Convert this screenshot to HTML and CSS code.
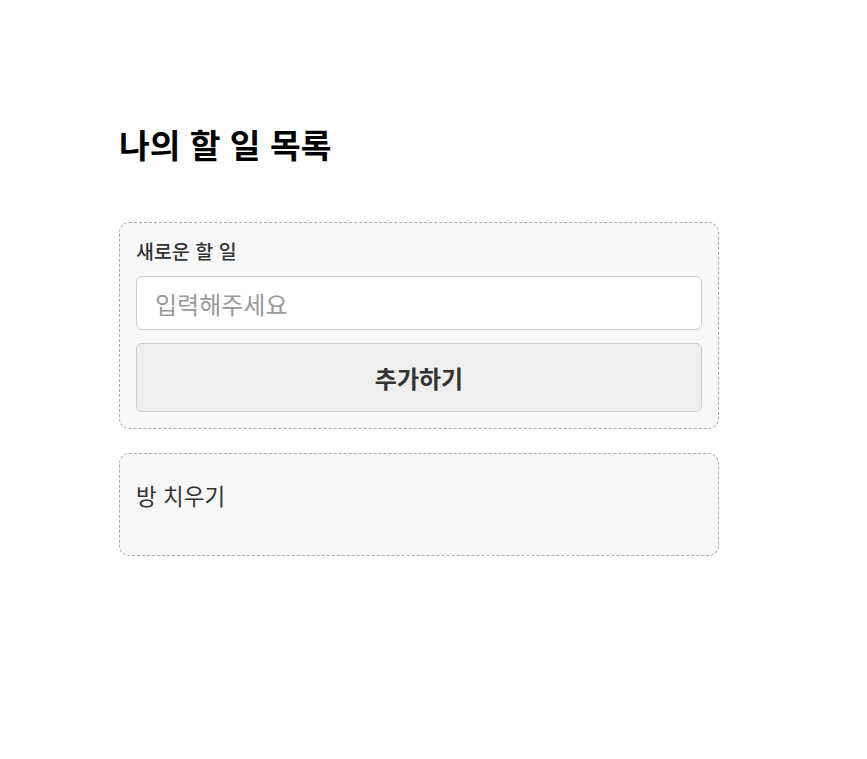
FILE: index.html
```html
<!DOCTYPE html>
<html lang="ko">
<head>
<meta charset="utf-8">
<link rel="stylesheet" href="styles.css">
</head>
<body>
<main class="app">
  <h1 class="title">나의 할 일 목록</h1>
  <section class="card form-card">
    <label class="label" for="todo">새로운 할 일</label>
    <input id="todo" class="input" type="text" placeholder="입력해주세요">
    <button class="btn" type="button">추가하기</button>
  </section>
  <section class="card list-card">
    <p class="item">방 치우기</p>
  </section>
</main>
</body>
</html>
```
FILE: styles.css
```css
* { box-sizing: border-box; }
body {
  margin: 0;
  background: #fff;
  font-family: "Noto Sans CJK KR", "Noto Sans", sans-serif;
  color: #333;
}
.app {
  width: 600px;
  margin-left: 119px;
  padding-top: 117px;
}
.title {
  margin: 0 0 51px;
  font-size: 33.4px;
  line-height: 54px;
  font-weight: 700;
  color: #000;
}
.card {
  border: 1px dashed #aaa;
  border-radius: 10px;
  background: #f8f8f8;
}
.form-card {
  display: flex;
  flex-direction: column;
  padding: 16px;
}
.label {
  font-size: 19.5px;
  line-height: 24px;
  font-weight: 500;
  color: #333;
  margin-bottom: 13px;
}
.input {
  height: 54px;
  border: 1px solid #ccc;
  border-radius: 6px;
  background: #fff;
  padding: 0 18px;
  font-family: inherit;
  font-size: 24px;
  color: #333;
  margin-bottom: 13px;
}
.input::placeholder { color: #999; }
.btn {
  height: 69px;
  border: 1px solid #ccc;
  border-radius: 6px;
  background: #efefef;
  font-family: inherit;
  font-size: 24px;
  font-weight: 700;
  color: #333;
}
.list-card {
  margin-top: 24px;
  padding: 28px 16px 46px;
}
.item {
  margin: 0;
  font-size: 22.5px;
  line-height: 27px;
  color: #333;
}
```
